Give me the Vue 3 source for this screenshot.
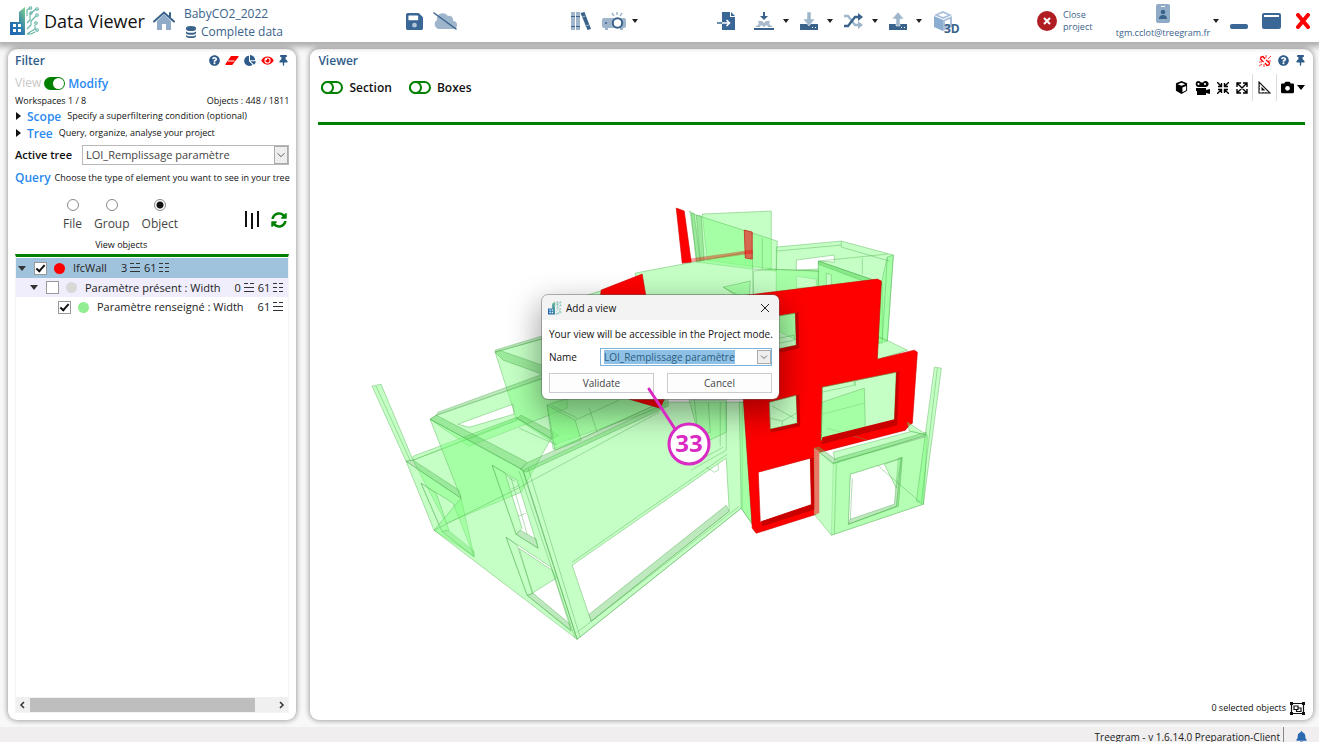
<script setup>
import { ref } from 'vue'

const mode = ref(true)
const section = ref(false)
const boxes = ref(false)
const kind = ref('Object')
const kinds = ['File', 'Group', 'Object']
const viewName = ref('LOI_Remplissage paramètre')
const rows = ref([
  { label: 'IfcWall', depth: 0, open: true, checked: true, tone: 'red', counts: [['3', '☱'], ['61', '☷']] },
  { label: 'Paramètre présent : Width', depth: 1, open: true, checked: false, tone: 'grey', counts: [['0', '☱'], ['61', '☷']] },
  { label: 'Paramètre renseigné : Width', depth: 2, open: false, checked: true, tone: 'green', counts: [['61', '☱']] },
])
const help = 'M504 256c0 136.997-111.043 248-248 248S8 392.997 8 256C8 119.083 119.043 8 256 8s248 111.083 248 248zM262.655 90c-54.497 0-89.255 22.957-116.549 63.758-3.536 5.286-2.353 12.415 2.715 16.258l34.699 26.31c5.205 3.947 12.621 3.008 16.665-2.122 17.864-22.658 30.113-35.797 57.303-35.797 20.429 0 45.698 13.148 45.698 32.958 0 14.976-12.363 22.667-32.534 33.976C247.128 238.528 216 254.941 216 296v4c0 6.627 5.373 12 12 12h56c6.627 0 12-5.373 12-12v-1.333c0-28.462 83.186-29.647 83.186-106.667 0-58.002-60.165-102-116.531-102zM256 338c-25.365 0-46 20.635-46 46 0 25.364 20.635 46 46 46s46-20.636 46-46c0-25.365-20.635-46-46-46z'
const pin = 'M298.028 214.267L285.793 96H328c13.255 0 24-10.745 24-24V24c0-13.255-10.745-24-24-24H56C42.745 0 32 10.745 32 24v48c0 13.255 10.745 24 24 24h42.207L85.972 214.267C37.465 236.82 0 277.261 0 328c0 13.255 10.745 24 24 24h136v104.007c0 1.242.289 2.467.845 3.578l24 48c2.941 5.882 11.364 5.893 14.311 0l24-48a8.008 8.008 0 0 0 .845-3.578V352h136c13.255 0 24-10.745 24-24-.001-51.183-37.983-91.42-85.973-113.733z'
</script>

<template>
  <div class="app">
    <svg class="defs" aria-hidden="true">
      <symbol id="logo" viewBox="0 0 30 30">
        <defs>
          <linearGradient id="lg" x1="0" y1="1" x2="1" y2="0">
            <stop offset="0" stop-color="#1d64b4" /><stop offset=".45" stop-color="#2b78ae" /><stop offset="1" stop-color="#7ed38a" />
          </linearGradient>
        </defs>
        <path fill="url(#lg)" fill-rule="evenodd" d="M0 16h9V6l6-5v28H0zM3 18v3h3v-3zm5 0v3h3v-3zm-5 5v3h3v-3zm5 0v3h3v-3z" />
        <g fill="none" stroke="#5fb3a4" stroke-width="1.100">
          <path d="M17 28l8-5V19M17 23l4-4v-4l5-5M17 17l3-3V8l6-5M17 10V4l3-2M17 28h4l4-2" />
          <circle cx="20.500" cy="2" r="1.300" /><circle cx="27" cy="3" r="1.300" /><circle cx="27" cy="9" r="1.300" />
          <circle cx="26" cy="17" r="1.300" /><circle cx="27" cy="24" r="1.300" /><circle cx="21" cy="7" r="1.200" />
        </g>
      </symbol>
    </svg>

    <header class="topbar">
      <div class="zone">
        <svg class="logo"><use href="#logo" /></svg>
        <h1>Data Viewer</h1>
        <button class="ic home" aria-label="Home">
          <svg width="22" height="20" viewBox="0 0 22 20"><path fill="#8fabc8" d="M4 10l7-7 7 7v9h-5v-6H9v6H4z" /><path fill="none" stroke="#3a638c" stroke-width="2" stroke-linecap="round" d="M1 10.500L11 1.500l10 9M17 2v4" /></svg>
        </button>
        <div class="project">
          <span>BabyCO2_2022</span>
          <span class="sub">
            <svg width="10" height="12" viewBox="0 0 10 12"><path fill="#3a638c" d="M0 2a5 2 0 0 1 10 0v1a5 2 0 0 1-10 0zM0 5a5 1.800 0 0 0 10 0v2a5 1.800 0 0 1-10 0zM0 8.500a5 1.800 0 0 0 10 0V10a5 2 0 0 1-10 0z" /></svg>
            Complete data
          </span>
        </div>
      </div>

      <div class="zone">
        <button class="ic" aria-label="Save"><svg width="17" height="17" viewBox="0 32 448 448"><path fill="#3a6796" fill-rule="evenodd" d="M433.941 129.941l-83.882-83.882A48 48 0 0 0 316.118 32H48C21.490 32 0 53.490 0 80v352c0 26.510 21.490 48 48 48h352c26.510 0 48-21.490 48-48V163.882a48 48 0 0 0-14.059-33.941zM320 212c0 6.600-5.400 12-12 12H76c-6.600 0-12-5.400-12-12V108c0-6.600 5.400-12 12-12h228l16 16z" /><circle cx="224" cy="352" r="62" fill="#b4c5d8" /></svg></button>
        <button class="ic cloud" aria-label="Offline"><svg width="24" height="18" viewBox="0 0 24 18"><path fill="#9fb5cc" d="M5 17a5 5 0 0 1-1-9 6 6 0 0 1 11-4 4 4 0 0 1 5 5 4 4 0 0 1 0 8z" /><path stroke="#3a638c" stroke-width="1.500" stroke-linecap="round" d="M1 1l22 16" /></svg></button>
      </div>

      <div class="zone">
        <button class="ic" aria-label="Library"><svg width="22" height="18" viewBox="0 0 22 18"><path fill="#9fb5cc" d="M1 0h4v18H1zM6 0h4v18H6z" /><path fill="#3a638c" d="M1 4h4v1H1zm5 0h4v1H6zM1 14h4v1H1zm5 0h4v1H6zM10.500 1l4-1 6.500 17-3.500 1z" /><path stroke="#9fb5cc" d="M12 5l3.500-1M15 14l4-1" /></svg></button>
        <button class="ic projector" aria-label="Presentation"><svg width="24" height="18" viewBox="0 0 24 18"><rect y="6" width="24" height="10" rx="2" fill="#9fb5cc" /><path fill="#9fb5cc" d="M3 16h3v2H3zm15 0h3v2h-3z" /><path stroke="#9fb5cc" stroke-width="1.500" d="M10 1l2 3M15 0v3M20 1l-2 3" /><circle cx="4" cy="11" r="1" fill="#3a638c" /><circle cx="15.500" cy="11" r="4.700" fill="#fff" stroke="#3a638c" stroke-width="2" /></svg></button>
        <i class="caret"></i>
      </div>

      <div class="zone">
        <button class="ic" aria-label="Import file"><svg width="19" height="18" viewBox="0 0 19 18"><path fill="#3a6796" d="M5 0h8v5h5v13H5zM14 0l4 4h-4z" /><path fill="none" stroke="#fff" stroke-width="1.600" d="M5 11h7M9.500 8l3 3-3 3" /><path stroke="#3a6796" stroke-width="1.500" d="M0 11h5" /></svg></button>
        <div class="pair merge"><button class="ic" aria-label="Merge"><svg width="22" height="18" viewBox="0 0 22 18"><path fill="#a9bacb" d="M2 15l4-3-1-3h4l2 2 2-2h4l-1 3 4 3h-5l-1-2-3 2-3-2-1 2z" /><path stroke="#3a638c" stroke-width="2" d="M1 17h20M11 0v5" /><path fill="#3a638c" d="M7 4h8l-4 4z" /></svg></button><i class="caret"></i></div>
        <div class="pair"><button class="ic" aria-label="Download"><svg width="18" height="18" viewBox="0 0 18 18"><path fill="#3a638c" d="M0 12h18v6H0z" /><path fill="#9fb5cc" stroke="#fff" stroke-width=".5" d="M7 0h4v7h4l-6 7-6-7h4z" /><path fill="#fff" d="M12 15h1v1h-1zm3 0h1v1h-1z" /></svg></button><i class="caret"></i></div>
        <div class="pair"><button class="ic" aria-label="Shuffle"><svg width="19" height="16" viewBox="0 0 19 16"><path fill="none" stroke="#9fb5cc" stroke-width="2.300" d="M0 3h4l7 9h5" /><path fill="#9fb5cc" d="M14 8l5 4-5 4z" /><path fill="none" stroke="#3a638c" stroke-width="2.300" d="M0 13h4l7-9h5" /><path fill="#3a638c" d="M14 0l5 4-5 4z" /></svg></button><i class="caret"></i></div>
        <div class="pair"><button class="ic" aria-label="Upload"><svg width="18" height="18" viewBox="0 0 18 18"><path fill="#3a638c" d="M0 12h18v6H0z" /><path fill="#9fb5cc" stroke="#fff" stroke-width=".5" d="M7 14V7H3l6-7 6 7h-4v7z" /><path fill="#fff" d="M12 15h1v1h-1zm3 0h1v1h-1z" /></svg></button><i class="caret"></i></div>
        <button class="ic cube3d" aria-label="3D view"><svg width="32" height="28" viewBox="0 -2 32 28"><path fill="#a9c0dc" d="M1 4l9-4 9 4-9 4z" /><path fill="#8badd2" d="M1 5l9 4v11l-9-4z" /><path fill="#a9c0dc" d="M19 5l-9 4v11l9-4z" /><path fill="#fff" d="M5 4l5-2 5 2-5 2zM12 10l5-2v5l-5 2z" /><text x="11" y="22" class="t3d">3D</text></svg></button>
      </div>

      <div class="zone">
        <button class="close-project">
          <svg width="20" height="20" viewBox="0 0 20 20"><circle cx="10" cy="10" r="10" fill="#b01e23" /><path stroke="#fff" stroke-width="2" d="M7 7l6 6M13 7l-6 6" /></svg>
          <span>Close<br />project</span>
        </button>
        <button class="user">
          <svg width="14" height="19" viewBox="0 0 14 19"><rect width="14" height="19" rx="2" fill="#8fabc8" /><path fill="#fff" d="M5 2h4v1H5z" /><circle cx="7" cy="8" r="2.300" fill="#3a638c" /><path fill="#3a638c" d="M3 15q0-4 4-4t4 4z" /></svg>
          <span>tgm.cclot@treegram.fr</span>
        </button>
        <i class="caret"></i>
        <button class="ic minimise" aria-label="Minimise"><svg width="18" height="16" viewBox="0 0 18 16"><rect y="11" width="18" height="5" rx="2" fill="#3a6796" /></svg></button>
        <button class="ic" aria-label="Maximise"><svg width="19" height="16" viewBox="0 0 19 16"><rect width="19" height="16" rx="2" fill="#3a6796" /><path fill="#fff" d="M2 2h15v2H2z" /></svg></button>
        <button class="ic" aria-label="Close"><svg width="14" height="16" viewBox="0 0 14 16"><path stroke="#f00" stroke-width="4" stroke-linecap="round" d="M2 2l10 12M12 2L2 14" /></svg></button>
      </div>
    </header>

    <main>
      <aside class="panel filter">
        <div class="head">
          <h2>Filter</h2>
          <div class="tools">
            <button class="ic" aria-label="Help"><svg width="11" height="11" viewBox="0 0 512 512"><path fill="#2f5c8a" :d="help" /></svg></button>
            <button class="ic" aria-label="Clear"><svg width="14" height="11" viewBox="0 0 14 11"><path fill="#f00" d="M6 1h7q1 0 .500 1L8 9q-.500 1-1 1H1q-1 0-.500-1z" /><path stroke="#fff" d="M3 6h6.500" /></svg></button>
            <button class="ic" aria-label="Chart"><svg width="12" height="11" viewBox="0 0 544 512"><path fill="#2f5c8a" d="M527.790 288H290.500l158.030 158.030c6.040 6.040 15.980 6.530 22.190.680 38.700-36.460 65.320-85.610 73.130-140.860 1.340-9.460-6.510-17.850-16.060-17.850zm-15.830-64.800C503.720 103.740 408.260 8.280 288.800.040 279.680-.590 272 7.100 272 16.240V240h223.770c9.140 0 16.820-7.680 16.190-16.800zM224 288V50.710c0-9.550-8.390-17.400-17.840-16.060C86.990 51.490-4.100 155.600.140 280.370 4.500 408.510 114.830 513.590 243.030 511.980c50.400-.630 96.970-16.870 135.260-44.030 7.900-5.600 8.420-17.230 1.570-24.080L224 288z" /></svg></button>
            <button class="ic" aria-label="Visibility"><svg width="13" height="11" viewBox="0 0 576 512"><path fill="#f00" d="M572.520 241.400C518.290 135.590 410.930 64 288 64S57.680 135.640 3.480 241.410a32.350 32.350 0 0 0 0 29.190C57.710 376.410 165.070 448 288 448s230.320-71.640 284.520-177.410a32.350 32.350 0 0 0 0-29.190zM288 400a144 144 0 1 1 144-144 143.930 143.930 0 0 1-144 144zm0-240a95.310 95.310 0 0 0-25.310 3.790 47.850 47.850 0 0 1-66.900 66.900A95.780 95.780 0 1 0 288 160z" /></svg></button>
            <button class="ic" aria-label="Pin"><svg width="9" height="11" viewBox="0 0 384 512"><path fill="#2f5c8a" :d="pin" /></svg></button>
          </div>
        </div>

        <label class="mode"><span class="off">View</span><input v-model="mode" type="checkbox" class="switch" /><b>Modify</b></label>
        <div class="stats"><span>Workspaces 1 / 8</span><span>Objects : 448 / 1811</span></div>
        <div class="fold"><i class="tri"></i><b>Scope</b><span>Specify a superfiltering condition (optional)</span></div>
        <div class="fold"><i class="tri"></i><b>Tree</b><span>Query, organize, analyse your project</span></div>

        <div class="active">
          <label for="tree">Active tree</label>
          <div class="combo">
            <select id="tree"><option>LOI_Remplissage paramètre</option></select>
            <svg class="drop" viewBox="0 0 14 18"><path fill="none" stroke="#444" d="M3 7l4 4 4-4" /></svg>
          </div>
        </div>
        <div class="query"><b>Query</b><span>Choose the type of element you want to see in your tree</span></div>

        <div class="types">
          <label v-for="k in kinds" :key="k"><input v-model="kind" type="radio" name="kind" :value="k" />{{ k }}</label>
          <div class="acts">
            <button class="ic" aria-label="Columns"><svg width="14" height="18" viewBox="0 0 14 18"><path stroke="#111" stroke-width="2" d="M1 0v16M7 2v16M13 0v16" /></svg></button>
            <button class="ic" aria-label="Refresh"><svg width="16" height="16" viewBox="0 0 512 512"><path fill="#008000" d="M370.720 133.280C339.458 104.008 298.888 87.962 255.848 88c-77.458.068-144.328 53.178-162.791 126.850-1.344 5.363-6.122 9.150-11.651 9.150H24.103c-7.498 0-13.194-6.807-11.807-14.176C33.933 94.924 134.813 8 256 8c66.448 0 126.791 26.136 171.315 68.685L463.030 40.970C478.149 25.851 504 36.559 504 57.941V192c0 13.255-10.745 24-24 24H345.941c-21.382 0-32.090-25.851-16.971-40.971l41.750-41.749zM32 296h134.059c21.382 0 32.090 25.851 16.971 40.971l-41.750 41.750c31.262 29.273 71.835 45.319 114.876 45.280 77.418-.070 144.315-53.144 162.787-126.849 1.344-5.363 6.122-9.150 11.651-9.150h57.304c7.498 0 13.194 6.807 11.807 14.176C478.067 417.076 377.187 504 256 504c-66.448 0-126.791-26.136-171.315-68.685L48.970 471.030C33.851 486.149 8 475.441 8 454.059V320c0-13.255 10.745-24 24-24z" /></svg></button>
          </div>
        </div>
        <div class="caption">View objects</div>

        <div class="treebox">
          <ul role="tree">
            <li v-for="r in rows" :key="r.label" role="treeitem" :class="'d' + r.depth">
              <i :class="['twist', { open: r.open }]"></i>
              <label><input v-model="r.checked" type="checkbox" class="tick" /><i :class="['dot', r.tone]"></i><span>{{ r.label }}</span></label>
              <span class="counts"><span v-for="c in r.counts" :key="c[1]">{{ c[0] }}
                <svg width="10" height="9" viewBox="0 0 10 9"><path v-if="c[1] === '☷'" stroke="#333" d="M0 .500h4m2 0h4M0 4.500h4m2 0h4M0 8.500h4m2 0h4" /><path v-else stroke="#333" d="M0 .500h4m2 0h4M0 4.500h10M0 8.500h10" /></svg>
              </span></span>
            </li>
          </ul>
          <div class="hscroll">
            <button aria-label="Scroll left"><svg width="14" height="14" viewBox="0 0 14 14"><path fill="none" stroke="#333" stroke-width="1.500" d="M8 4L5 7l3 3" /></svg></button>
            <div class="track"><div class="thumb"></div></div>
            <button aria-label="Scroll right"><svg width="14" height="14" viewBox="0 0 14 14"><path fill="none" stroke="#333" stroke-width="1.500" d="M6 4l3 3-3 3" /></svg></button>
          </div>
        </div>
      </aside>

      <section class="panel viewer">
        <div class="head">
          <h2>Viewer</h2>
          <div class="tools">
            <button class="ic" aria-label="Unlink"><svg width="12" height="12" viewBox="0 0 12 12"><path fill="none" stroke="#f00" stroke-width="1.300" d="M6 4L4 1.500 2 2 1.500 4l3 3M7 5l3.500 3-.500 2-2 .500L6 8" /><path stroke="#f00" stroke-width=".8" d="M7 3V0M9 4l3-3M9 6h3M5 9v3M3 9l-3 2M3 7H0" /></svg></button>
            <button class="ic" aria-label="Help"><svg width="11" height="11" viewBox="0 0 512 512"><path fill="#2f5c8a" :d="help" /></svg></button>
            <button class="ic" aria-label="Pin"><svg width="9" height="11" viewBox="0 0 384 512"><path fill="#2f5c8a" :d="pin" /></svg></button>
          </div>
        </div>
        <div class="bar">
          <label><input v-model="section" type="checkbox" class="switch ring" />Section</label>
          <label><input v-model="boxes" type="checkbox" class="switch ring" />Boxes</label>
          <div class="views">
            <button class="ic" aria-label="Cube"><svg width="13" height="13" viewBox="0 0 14 14"><path d="M7 0l6 2.500v8L7 14l-6-3.500v-8z" /><path fill="#fff" d="M3 3.500L7 2l4 1.500L7 5zM8 7l4-1.500V10l-4 2z" /></svg></button>
            <button class="ic" aria-label="Record"><svg width="15" height="14" viewBox="0 0 15 14"><path fill-rule="evenodd" d="M3.500 0a3 3 0 0 1 2.500 1.500h2A3 3 0 1 1 10 6H4A3 3 0 0 1 3.500 0zm0 2a1 1 0 1 0 .010 0zm6.500 0a1 1 0 1 0 .010 0zM1 7h10v2l4-1v5l-4-1v2H2v-4H1z" /></svg></button>
            <button class="ic" aria-label="Collapse"><svg width="12" height="12" viewBox="0 0 12 12"><path fill="none" stroke="#000" stroke-width="1.400" d="M0 0l4 4M1 4.500h3.500V1M12 0L8 4M11 4.500H7.500V1M0 12l4-4M1 7.500h3.500V11M12 12L8 8M11 7.500H7.500V11" /></svg></button>
            <button class="ic" aria-label="Expand"><svg width="12" height="12" viewBox="0 0 12 12"><path fill="none" stroke="#000" stroke-width="1.400" d="M1 1l10 10M11 1L1 11M1 5V1h4M7 1h4v4M11 7v4H7M5 11H1V7" /></svg></button>
            <span class="ruler"><button class="ic" aria-label="Measure"><svg width="13" height="13" viewBox="0 0 13 13"><path fill="none" stroke="#111" stroke-width="1.100" d="M1 1v11h11zM4 7v2h2z" /><path stroke="#111" d="M1 5h1M1 8h1M5 12v-1M8 12v-1" /></svg></button></span>
            <button class="ic" aria-label="Snapshot"><svg width="13" height="13" viewBox="0 0 512 512"><path d="M512 144v288c0 26.500-21.500 48-48 48H48c-26.500 0-48-21.500-48-48V144c0-26.500 21.500-48 48-48h88l12.300-32.900c7-18.700 24.900-31.100 44.900-31.100h125.500c20 0 37.900 12.400 44.900 31.100L376 96h88c26.500 0 48 21.500 48 48z" /><circle cx="256" cy="288" r="92" fill="#fff" /></svg></button>
            <i class="caret big"></i>
          </div>
        </div>

        <svg class="model" viewBox="319 125 986 570" preserveAspectRatio="xMidYMin meet" role="img" aria-label="Building model">
          <g class="g">
            <path d="M703 214l69-3v58l-64-9z" />
            <path d="M690 211l7 4 81 26-1 30-24-2-55-7-7-49z" />
            <path d="M692 213l3 1 6 47-4 1zM697 215l5 1 3 44-4 1zM763 238v31" class="deep" />
            <path fill-rule="evenodd" d="M777 247l65-6 52 14-6 86-60 14-51-25zM797 260l38-5v7l-15-1-1 8-22 1zm0 16l20 3v8l-20 1z" />
            <path fill-rule="evenodd" d="M819 261l64 22v60l-64-6zM827 273l5 2v14l-5-1z" /><path d="M819 261l64 22-3 4-61-23z" class="deep" />
            <path d="M754 271l15-2 50 2v22l-65 2z" />
            <path d="M636 273l117-22 1 44H638zM588 295l16-5v8z" />
            <path d="M724 287l27-6-1 14h-14z" />
            <path d="M879 336l29 14-31 10z" />
            <path d="M882 283l6-26 6-2-6 86-9-4z" />
            <path class="ln" d="M819 261l69-7M724 287l16 9M769 269l51 2M863 258v16M888 257l-5 82M842 241v6l48 14M777 251l65-6" />
          </g>
          <g class="g">
            <path d="M373 386l9-2 32 76-7 1z" /><path class="ln" d="M377 386l34 74" />
            <path d="M496 352l70-20 100 50v24l-110 38-39-26z" />
            <path d="M496 352l4-2 60 21v9l-56-20zM496 352l50-14v-3l-50 15z" class="deep" />
            <path fill-rule="evenodd" d="M431 419l7-4 130-45v38L470 446zM459 424l55-20 1 10-45 13z" />
            <path d="M437 415l115-40v-4L439 412z" class="deep" />
            <path d="M414 460l104-42 34 20-30 54-75 31z" />
            <path fill-rule="evenodd" d="M407 461l55 37 13 58-40-26zM422 483l32 20 21 53-32-24z" />
            <path d="M407 461l7-1 46 30 2 8zM518 418l34 21 8-4-38-20zM443 531l6-1 26 21v6z" class="deep" />
            <path d="M422 483l15 10 13 37-7 1zM414 460l104-40v-3l-104 39z" />
            <path d="M548 405l18-6 60-6 30 12-80 36-22 8z" />
            <path d="M548 405l28 15 6 20-26 10z" /><path class="ln" d="M576 420l44-20M590 408l8 24M520 428l38 17M552 405l26 13" />
            <path fill-rule="evenodd" d="M431 419l92 50 55 170-143-109 27-32zM493 465l25 15 21 68-22-14zm14 72l45 30 20 63-44-35z" />
            <path d="M431 419l6-4 91 47-6 7z" class="deep" />
            <path d="M517 534l4-4 16 9 2 9zM528 595l6-2 36 30 2 8z" class="deep" />
            <path d="M493 465l13 8 17 55-6 6z" /><path d="M507 537l11 8 16 48-6 2zM520 548l33 22 4 8-24 15z" />
            <path class="ln" d="M507 475l5 3 16 56M512 489l8-4M519 516l8-3M510 478l6 3" />
            <path fill-rule="evenodd" d="M524 470l144-68h77l8 122-11-16-164 131zM573 565l154-107 3 53-138 110z" />
            <path d="M521 469l8-7 140-63v7l-142 66z" class="deep" />
            <path d="M592 621l138-110-3-6-137 109z" class="deep" />
            <path class="ln" d="M524 470l54 169M529 468l52 169M520 471l56 167M573 562l155-108M743 402v106M742 508l-164 131M740 506l-162 126" />
            <path d="M740 402h5l8 122-11-16z" />
            <path d="M690 400l12 44 25-12V400z" />
            <path class="ln" d="M695 399l4 38 12-5-2-30M692 470l35-20V402M700 460l24-13M721 402v44M707 467l8 5 4-2v-6" />
            <path class="ln" d="M524 485L660 412M435 530l90-45" />
          </g>
          <g class="r">
            <path d="M677 208l8 3 7 51-9 1z" /><path d="M602 290l41-16 4 24h-46zM630 399h35l-4 9z" />
            <path d="M745 230l8 2v27l-7-1z" class="pale" /><path d="M683 263l70-10v-3l-63 9z" opacity=".4" />
            <path fill-rule="evenodd" d="M740 296l138-17 4 2-4 78 37-9 3 2-5 71-3 2-4 5-89 23v61l-60 19-4-5-9-130zM778 316l18-3 1 32-19 4zm-8 86l27-7 1 28-27 6zm53-15l74-15-2 50-73 18zm-64 85l52-14 1 47-51 17z" />
          </g>
          <g class="g">
            <path d="M778 316l18-3 1 32-19 4zM770 402l27-7 1 28-27 6zM823 387l74-15-2 50-73 18z" />
            <path class="ln" d="M780 338l15-3v5l-15 3M771 418l12 3 14-8M783 421v6M773 406l22 12M823 392l32-7v-4M823 414l42-11M828 428l40 12M856 380v6" />
            <path d="M823 402l42-14 1 42-44 10z" />
            <path d="M834 452l79-21 14 4-91 28z" /><path d="M815 448l5-1 20 15-6 2zM834 463l93-28v-3l-90 26z" class="deep" />
            <path d="M908 422l20 13-18-4z" />
            <path fill-rule="evenodd" d="M815 448l19 15 94-27-4 68-92 31-17-21zM851 474l51-16-5 48-48 18z" />
            <path fill-rule="evenodd" d="M834 463l94-27-4 68-92 31zM851 474l51-16-5 48-48 18z" opacity=".5" />
            <path d="M849 524l2-5 44-15 4-46 4-1-4 49z" class="deep" />
            <path d="M935 367l7 1-18 136-7-3z" /><path d="M885 464l17-6-5 30z" />
            <path class="ln" d="M938 368l-16 134M837 464l-2 70M853 478l-2 42M878 465l43 37" />
          </g>
          <g class="edge"><path d="M823 437l72-18 2-47 3-1-2 54-76 19zM762 521l50-17-1-46 3-1 2 52-53 17zM771 429l27-6-1-28 3-1 1 32-29 6zM778 349l19-4-1-32 3-1 1 36-22 5z" /><path d="M815 448l5 3v62l-5 1z" class="pale" /></g>
        </svg>

        <div class="selected">0 selected objects
          <svg width="15" height="13" viewBox="0 0 15 13"><path fill="none" stroke="#111" stroke-width="1.200" d="M1.500 1.500h12v10h-12zM4 4h4v3.500H4zM8 6h3v3.500H6.500V8" /><path fill="#111" d="M0 0h3v3H0zm12 0h3v3h-3zM0 10h3v3H0zm12 0h3v3h-3z" /></svg>
        </div>
      </section>
    </main>

    <footer><span>Treegram - v 1.6.14.0 Preparation-Client</span><svg width="11" height="12" viewBox="0 0 448 512"><path fill="#2a68b0" d="M224 512c35.320 0 63.970-28.650 63.970-64H160.030c0 35.350 28.650 64 63.970 64zm215.390-149.710c-19.320-20.760-55.470-51.990-55.470-154.290 0-77.700-54.480-139.900-127.940-155.160V32c0-17.670-14.320-32-31.980-32s-31.980 14.330-31.980 32v20.840C118.560 68.100 64.080 130.300 64.080 208c0 102.300-36.150 133.530-55.470 154.290-6 6.450-8.660 14.160-8.610 21.710.110 16.400 12.980 32 32.100 32h383.800c19.120 0 32-15.600 32.100-32 .050-7.550-2.610-15.270-8.610-21.710z" /></svg></footer>

    <div class="dialog" role="dialog" aria-labelledby="dlg">
      <div class="dtitle">
        <svg width="14" height="14"><use href="#logo" /></svg><span id="dlg">Add a view</span>
        <button class="ic" aria-label="Close dialog"><svg width="10" height="10" viewBox="0 0 10 10"><path stroke="#222" d="M1 1l8 8M9 1L1 9" /></svg></button>
      </div>
      <div class="dbody">
        <p>Your view will be accessible in the Project mode.</p>
        <div class="name">
          <label for="vname">Name</label>
          <div class="combo"><input id="vname" v-model="viewName" type="text" /><svg class="drop" viewBox="0 0 14 16"><path fill="none" stroke="#444" d="M3 6l4 4 4-4" /></svg></div>
        </div>
        <div class="btns"><button>Validate</button><button>Cancel</button></div>
      </div>
    </div>

    <svg class="callout" width="72" height="84" viewBox="0 0 72 84">
      <path stroke="#d92bc4" stroke-width="3" stroke-linecap="round" d="M5 5l26 40" />
      <circle cx="45" cy="60" r="20" fill="#fff" stroke="#d92bc4" stroke-width="3" />
      <text x="45" y="68" text-anchor="middle">33</text>
    </svg>
  </div>
</template>

<style>
html, body { margin: 0; overflow: hidden; }
</style>

<style scoped>
.app { position: relative; height: 100vh; display: flex; flex-direction: column; background: #f8f8f8; font: 9px/12px "Open Sans", "Noto Sans", sans-serif; color: #111; overflow: hidden; }
* { box-sizing: border-box; }
.defs { position: absolute; width: 0; height: 0; }
button { font: inherit; color: inherit; background: none; border: 0; padding: 0; }
button svg, .drop { display: block; }
.ic { display: block; flex: none; }
h1, h2, p, ul { margin: 0; padding: 0; }
.topbar { flex: none; height: 42px; display: grid; grid-template-columns: 396fr 164fr 147fr 320fr 282fr; padding: 0 0 0 10px; background: #fff; box-shadow: 0 2px 6px 3px rgba(0, 0, 0, .3); color: #3a638c; z-index: 1; }
.zone { display: flex; align-items: center; min-width: 0; }
.logo { width: 30px; height: 30px; flex: none; }
h1 { font-size: 18px; line-height: 24px; font-weight: 400; color: #111; margin-left: 4px; white-space: nowrap; }
.home { margin-left: 8px; }
.project { margin-left: 9px; padding-top: 3px; display: flex; flex-direction: column; font-size: 12px; line-height: 18px; white-space: nowrap; }
.sub { display: flex; align-items: center; gap: 5px; padding-left: 2px; }
.cloud { margin-left: 10px; }
.projector { margin: 0 6px 0 10px; }
.caret { width: 0; height: 0; flex: none; border: 3px solid transparent; border-top: 4px solid #222; border-bottom: 0; }
.caret.big { border-width: 5px 4px 0; border-top-color: #000; }
.pair { display: flex; align-items: center; gap: 9px; margin-right: 11px; }
.merge { margin-left: 17px; gap: 8px; }
.cube3d { padding-top: 3px; }
.t3d { font: 700 12px "Open Sans", sans-serif; fill: #3a638c; }
.close-project { display: flex; align-items: center; gap: 6px; text-align: left; white-space: nowrap; width: 81px; flex: none; }
.user { display: flex; flex-direction: column; align-items: center; gap: 4px; margin-right: 5px; flex: none; width: 90px; white-space: nowrap; }
.minimise { margin: 0 14px 0 11px; }
.minimise + .ic { margin-right: 15px; }

main { flex: 1; min-height: 0; display: flex; gap: 14px; padding: 7px 6px 7px 8px; }
.panel { background: #fff; border-radius: 9px; box-shadow: 0 0 5px 1px rgba(0, 0, 0, .35); display: flex; flex-direction: column; min-width: 0; }
.filter { width: 22.1%; padding: 3px 7px 7px 7px; }
.viewer { flex: 1; padding: 3px 8px 5px; }
.head { display: flex; justify-content: space-between; align-items: center; height: 17px; }
h2 { font-size: 12px; line-height: 17px; font-weight: 600; color: #2f5c8a; }
.tools { display: flex; align-items: center; gap: 5px; }
.filter .tools { padding-right: 1px; }
.viewer .tools { gap: 7px; }
.mode { display: flex; align-items: center; font-size: 12px; line-height: 18px; margin-top: 5px; gap: 3px; }
.off { color: #c8c8c8; }
b { color: #2a8af0; font-weight: 600; font-size: 12px; line-height: 17px; }
.switch { appearance: none; margin: 0; width: 21px; height: 13px; border-radius: 7px; background: #008000; position: relative; }
.switch::after { content: ""; position: absolute; right: 1px; top: 1px; width: 11px; height: 11px; border-radius: 50%; background: #fff; }
.switch.ring { width: 22px; background: #fff; border: 2px solid #008000; }
.switch.ring::after { left: -2px; top: -2px; right: auto; width: 9px; height: 9px; border: 2px solid #008000; }
.stats { display: flex; justify-content: space-between; line-height: 14px; margin-top: 2px; }
.fold { display: flex; align-items: center; height: 16px; white-space: nowrap; }
.fold + .fold { height: 18px; }
.fold b { margin-right: 6px; }
.tri { border: 4px solid transparent; border-left: 5px solid #111; border-right: 0; margin: 0 6px 0 1px; }
.active { display: flex; align-items: center; gap: 10px; margin-top: 2px; height: 22px; }
.active label { font-weight: 600; font-size: 11px; white-space: nowrap; }
.combo { flex: 1; display: flex; min-width: 0; border: 1px solid #b8b8b8; background: #fff; }
.active .combo { height: 20px; }
.combo select { appearance: none; flex: 1; min-width: 0; border: 0; background: none; padding: 0 3px; font: 11px/18px "Open Sans", sans-serif; color: #444; }
.drop { flex: none; width: 14px; border: 1px solid #aaa; background: #eee; pointer-events: none; }
.query { display: flex; align-items: center; gap: 4px; white-space: nowrap; margin-top: 3px; }
.types { display: flex; margin: 10px 0 0 48px; font-size: 12px; line-height: 18px; color: #444; gap: 12px; }
.types label { display: flex; flex-direction: column; align-items: center; gap: 4px; }
.types input { appearance: none; width: 12px; height: 12px; margin: 3px 0 0; border: 1px solid #888; border-radius: 50%; background: #fff; }
.types input:checked { background: radial-gradient(circle, #111 0 3px, #fff 4px); }
.acts { margin-left: auto; padding: 10px 2px 0 0; display: flex; align-items: center; gap: 12px; }
.caption { text-align: center; margin: 5px 62px 2px 0; line-height: 14px; }
.treebox { flex: 1; min-height: 0; border: 1px solid #f4f4f4; border-top: 3px solid #008000; display: flex; flex-direction: column; justify-content: space-between; padding-top: 1px; }
ul { list-style: none; }
li { display: flex; align-items: center; height: 20px; font-size: 11px; line-height: 18px; color: #222; white-space: nowrap; padding-left: 2px; }
li.d0 { background: #a0c3dd; }
li.d1 { background: #f0eefc; padding-left: 14px; height: 19px; }
li.d2 { padding-left: 26px; }
li label { display: flex; align-items: center; }
.twist { width: 8px; margin-right: 7px; flex: none; }
.twist.open { border: 4px solid transparent; border-top: 5px solid #333; border-bottom: 0; }
.tick { appearance: none; width: 13px; height: 13px; margin: 0 7px 0 1px; border: 1px solid #999; background: #fff; display: grid; place-items: center; }
.tick:checked::after { content: ""; width: 3px; height: 7px; margin-top: -2px; border: solid #111; border-width: 0 2px 2px 0; transform: rotate(42deg); }
.dot { width: 11px; height: 11px; border-radius: 50%; margin-right: 8px; }
.red { background: #f00; }
.grey { background: #d8d8d8; }
.green { background: #90ee90; }
.counts { margin-left: 14px; display: flex; gap: 4px; }
.hscroll { display: flex; height: 15px; background: #f0f0f0; align-items: center; }
.hscroll button { width: 14px; height: 14px; flex: none; }
.track { flex: 1; height: 14px; }
.thumb { width: 92%; height: 14px; background: #bebebe; }

.bar { display: flex; align-items: center; height: 37px; font-size: 12px; font-weight: 600; }
.bar label { display: flex; align-items: center; gap: 6px; margin: 0 14px 0 3px; }
.views { margin-left: auto; display: flex; align-items: center; gap: 7px; }
.ruler { border: solid #ddd; border-width: 0 1px; padding: 7px 5px; margin: 0 -3px; }
.views .big { margin-left: -4px; }
.model { flex: 1; min-height: 0; width: 100%; display: block; margin-top: 16px; border-top: 3px solid #008000; }
.g path { fill: #80ff80; fill-opacity: .46; stroke: #58b058; stroke-opacity: .55; stroke-width: .8; }
.g .deep { fill: #5cc85c; fill-opacity: .4; }
.g .ln { fill: none; }
.r path { fill: #f00; stroke: #c00; stroke-width: .6; }
.edge path { fill: #c80000; }
.edge .pale { fill: #e67a66; }
.r .pale { fill: #d56a50; }
.selected { display: flex; justify-content: flex-end; align-items: center; gap: 4px; height: 14px; }

footer { flex: none; height: 15px; background: #f0eeee; display: flex; justify-content: flex-end; align-items: flex-start; gap: 12px; padding-right: 12px; font-size: 10px; line-height: 20px; color: #222; }
footer span { border-right: 1px solid #888; padding-right: 3px; }
footer svg { margin-top: 4px; }

.dialog { position: absolute; z-index: 3; left: 542px; top: 295px; width: 237px; background: #fff; border-radius: 6px; outline: 1px solid rgba(90, 90, 90, .45); box-shadow: 0 12px 30px 4px rgba(0, 0, 0, .35); font-size: 10px; }
.dtitle { display: flex; align-items: center; height: 25px; background: #f3f3f3; border-radius: 6px 6px 0 0; padding: 0 9px 0 6px; gap: 4px; }
.dtitle .ic { margin-left: auto; }
.dbody { padding: 7px 7px 6px; }
p { line-height: 14px; white-space: nowrap; }
.name { display: flex; align-items: center; margin-top: 6px; height: 19px; }
.name label { width: 51px; }
.name .combo { height: 18px; border-color: #7eb4dc; justify-content: space-between; padding: 1px 0 1px 3px; }
.name input { field-sizing: content; max-width: 145px; border: 0; outline: 0; padding: 0; font: 10px/14px "Open Sans", sans-serif; color: #2c5c80; background: #8fc1e6; }
.btns { display: flex; gap: 13px; margin-top: 7px; }
.btns button { flex: 1; height: 20px; border: 1px solid #ccc; background: #fdfdfd; color: #444; }
.callout { position: absolute; z-index: 4; left: 644px; top: 384px; }
.callout text { font: 700 24px "Open Sans", sans-serif; fill: #d92bc4; }
</style>
